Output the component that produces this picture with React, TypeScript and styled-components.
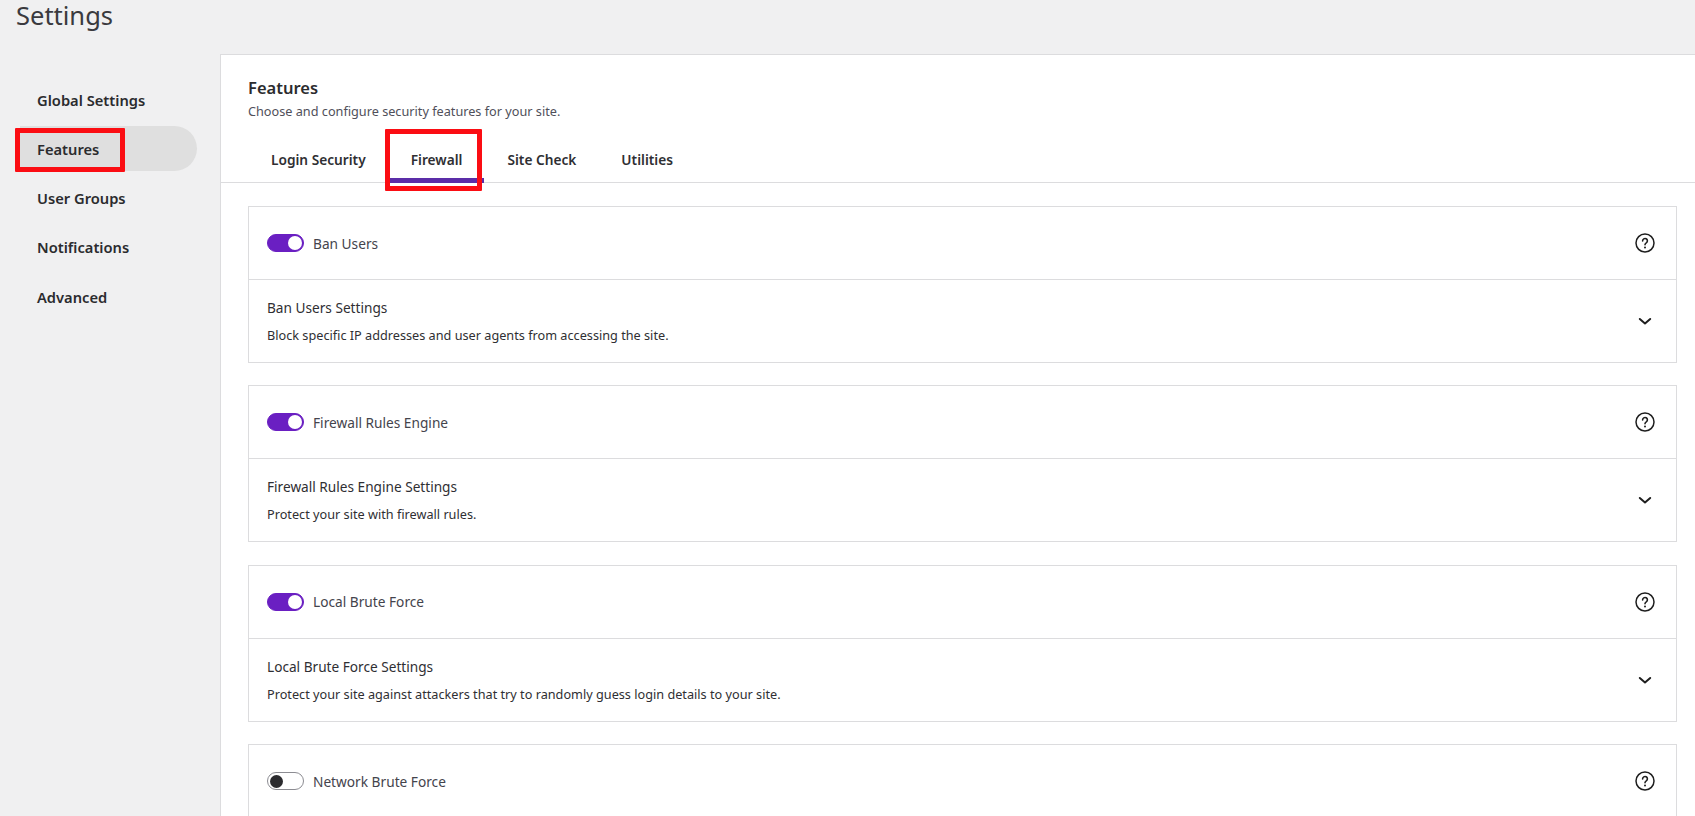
import React from "react";
import styled, { createGlobalStyle } from "styled-components";

const GlobalStyle = createGlobalStyle`
  html, body {
    margin: 0;
    height: 816px;
    overflow: hidden;
    background: #f0f0f1;
    font-family: "Noto Sans", "Liberation Sans", sans-serif;
    color: #2b2b2e;
  }
  * { box-sizing: border-box; }
`;

const Page = styled.div`
  height: 816px;
  overflow: hidden;
  position: relative;
`;

const PageTitle = styled.h1`
  margin: 0;
  padding: 0 0 0 16px;
  height: 54px;
  font-size: 25.5px;
  line-height: 30px;
  font-weight: 400;
  color: #3a3a3e;
`;

const Columns = styled.div`
  display: flex;
  align-items: flex-start;
`;

const Sidebar = styled.nav`
  width: 220px;
  flex: none;
  padding: 23px 23px 0 20px;
  display: flex;
  flex-direction: column;
  gap: 4.25px;
`;

const NavItem = styled.div<{ $active?: boolean }>`
  height: 45px;
  padding-left: 17px;
  display: flex;
  align-items: center;
  font-size: 14.7px;
  font-weight: 600;
  color: #2b2b2e;
  border-radius: 0 23px 23px 0;
  background: ${(p) => (p.$active ? "#dfdfdf" : "transparent")};
`;

const Panel = styled.main`
  flex: 1;
  height: 762px;
  overflow: hidden;
  background: #fff;
  border-top: 1px solid #dcdcde;
  border-left: 1px solid #dcdcde;
`;

const PanelHeader = styled.header`
  padding: 23px 27px 0;
`;

const PanelTitle = styled.h2`
  margin: 0;
  font-size: 16.5px;
  line-height: 20px;
  font-weight: 600;
  color: #2b2b2e;
`;

const PanelSubtitle = styled.p`
  margin: 4px 0 0;
  font-size: 12.7px;
  line-height: 18px;
  color: #50505a;
`;

const TabBar = styled.div`
  display: flex;
  gap: 1px;
  height: 55px;
  margin-top: 8px;
  padding-left: 28px;
  border-bottom: 1px solid #dcdcde;
`;

const Tab = styled.div<{ $active?: boolean }>`
  height: 55px;
  padding: 12px 22px 0;
  display: flex;
  align-items: center;
  font-size: 13.7px;
  font-weight: 600;
  color: #2f2f33;
  border-bottom: 5px solid ${(p) => (p.$active ? "#5b2da8" : "transparent")};
`;

const CardList = styled.div`
  padding: 23px 18px 0 27px;
  display: flex;
  flex-direction: column;
  gap: 22.4px;
`;

const Card = styled.section`
  flex: none;
  border: 1px solid #dcdcde;
`;

const CardTop = styled.div`
  height: 72px;
  padding: 0 21px 0 18px;
  display: flex;
  align-items: center;
  gap: 9px;
`;

const CardBottom = styled.div`
  height: 83px;
  padding: 0 21px 0 18px;
  border-top: 1px solid #dcdcde;
  display: flex;
  justify-content: space-between;
  align-items: center;
`;

const Toggle = styled.span<{ $on?: boolean }>`
  width: 37px;
  height: 18px;
  padding: ${(p) => (p.$on ? "1px" : "1.5px")};
  flex: none;
  display: flex;
  align-items: center;
  justify-content: ${(p) => (p.$on ? "flex-end" : "flex-start")};
  border-radius: 9px;
  background: ${(p) => (p.$on ? "#6a1fc2" : "#fff")};
  border: 1px solid ${(p) => (p.$on ? "#6a1fc2" : "#8c8c92")};
`;

const ToggleKnob = styled.span<{ $on?: boolean }>`
  width: ${(p) => (p.$on ? "14px" : "13px")};
  height: ${(p) => (p.$on ? "14px" : "13px")};
  border-radius: 50%;
  background: ${(p) => (p.$on ? "#fff" : "#2b2b2e")};
`;

const ToggleLabel = styled.span`
  flex: 1;
  font-size: 13.7px;
  color: #44444c;
`;

const SettingsText = styled.div`
  display: flex;
  flex-direction: column;
`;

const SettingsTitle = styled.span`
  font-size: 13.65px;
  line-height: 20px;
  color: #2f2f33;
`;

const SettingsDesc = styled.span`
  margin-top: 8px;
  font-size: 12.7px;
  line-height: 18px;
  color: #2f2f33;
`;

const IconSlot = styled.span`
  width: 20px;
  height: 20px;
  flex: none;
  display: flex;
  align-items: center;
  justify-content: center;
  color: #1e1e1e;
`;

// the red annotation boxes drawn on top of the screenshot
const Marker = styled.div<{ $left: number; $top: number; $w: number; $h: number }>`
  position: absolute;
  left: ${(p) => p.$left}px;
  top: ${(p) => p.$top}px;
  width: ${(p) => p.$w}px;
  height: ${(p) => p.$h}px;
  border: 5px solid #fb0d13;
  border-radius: 1px;
  pointer-events: none;
`;

const HelpIcon = () => (
  <svg width="20" height="20" viewBox="0 0 20 20" fill="none" stroke="currentColor">
    <circle cx="10" cy="10" r="9" strokeWidth="1.5" />
    <path d="M7.6 7.9a2.4 2.4 0 1 1 3.7 2c-.8.5-1.3 1-1.3 1.8" strokeWidth="1.6" strokeLinecap="round" />
    <circle cx="10" cy="14.4" r="1" fill="currentColor" stroke="none" />
  </svg>
);

const ChevronIcon = () => (
  <svg width="14" height="10" viewBox="0 0 14 10" fill="none" stroke="currentColor">
    <path d="M1.8 3 7 7.4 12.2 3" strokeWidth="2" strokeLinecap="round" strokeLinejoin="round" />
  </svg>
);

interface IFeature {
  name: string;
  on: boolean;
  title?: string;
  desc?: string;
}

const features: IFeature[] = [
  {
    name: "Ban Users",
    on: true,
    title: "Ban Users Settings",
    desc: "Block specific IP addresses and user agents from accessing the site.",
  },
  {
    name: "Firewall Rules Engine",
    on: true,
    title: "Firewall Rules Engine Settings",
    desc: "Protect your site with firewall rules.",
  },
  {
    name: "Local Brute Force",
    on: true,
    title: "Local Brute Force Settings",
    desc: "Protect your site against attackers that try to randomly guess login details to your site.",
  },
  { name: "Network Brute Force", on: false },
];

const navItems = ["Global Settings", "Features", "User Groups", "Notifications", "Advanced"];
const tabs = ["Login Security", "Firewall", "Site Check", "Utilities"];

const App: React.FC = () => {
  return (
    <Page>
      <GlobalStyle />
      <PageTitle>Settings</PageTitle>
      <Columns>
        <Sidebar>
          {navItems.map((item) => (
            <NavItem key={item} $active={item === "Features"}>
              {item}
            </NavItem>
          ))}
        </Sidebar>
        <Panel>
          <PanelHeader>
            <PanelTitle>Features</PanelTitle>
            <PanelSubtitle>Choose and configure security features for your site.</PanelSubtitle>
          </PanelHeader>
          <TabBar>
            {tabs.map((tab) => (
              <Tab key={tab} $active={tab === "Firewall"}>
                {tab}
              </Tab>
            ))}
          </TabBar>
          <CardList>
            {features.map((f) => (
              <Card key={f.name}>
                <CardTop>
                  <Toggle $on={f.on}>
                    <ToggleKnob $on={f.on} />
                  </Toggle>
                  <ToggleLabel>{f.name}</ToggleLabel>
                  <IconSlot>
                    <HelpIcon />
                  </IconSlot>
                </CardTop>
                {f.title && (
                  <CardBottom>
                    <SettingsText>
                      <SettingsTitle>{f.title}</SettingsTitle>
                      <SettingsDesc>{f.desc}</SettingsDesc>
                    </SettingsText>
                    <IconSlot>
                      <ChevronIcon />
                    </IconSlot>
                  </CardBottom>
                )}
              </Card>
            ))}
          </CardList>
        </Panel>
      </Columns>
      <Marker $left={15} $top={128} $w={110} $h={44} />
      <Marker $left={385} $top={129} $w={97} $h={62} />
    </Page>
  );
};

export default App;
